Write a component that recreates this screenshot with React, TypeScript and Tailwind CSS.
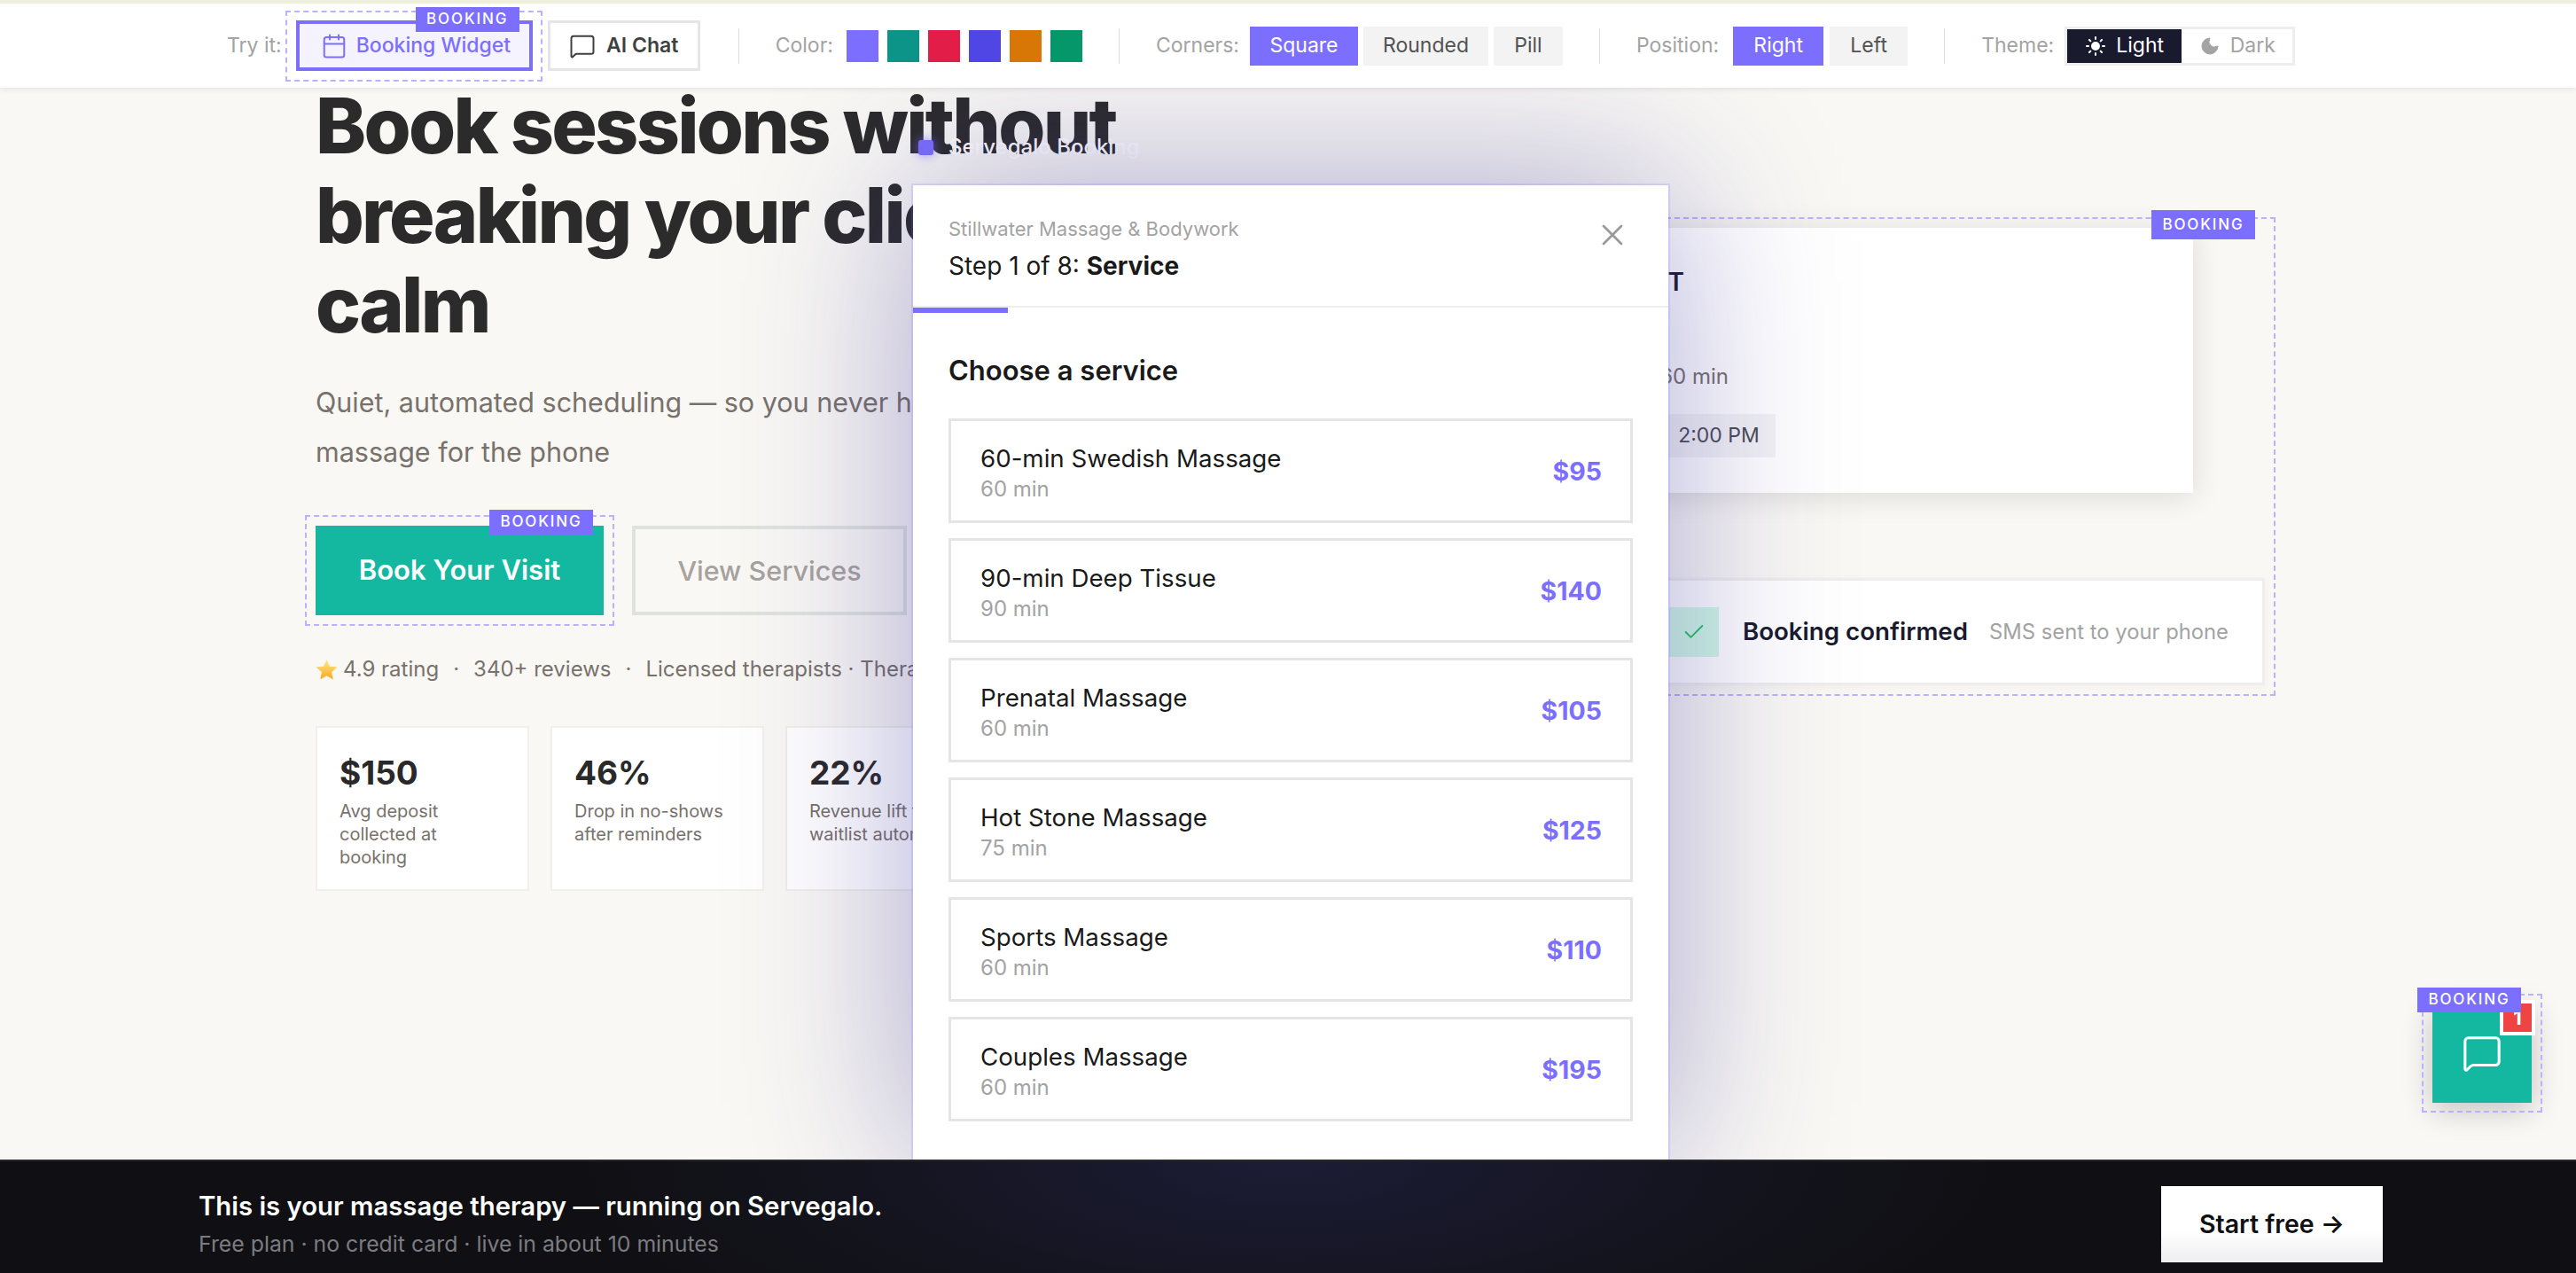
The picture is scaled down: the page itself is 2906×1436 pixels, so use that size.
import React from "react";
import { Calendar, MessageSquare, Sun, Moon, X, Check } from "lucide-react";

const FONT = "font-['Inter','Liberation_Sans',sans-serif]";

function Tag({ className = "", badge = "", inset = "-inset-[12px]" }: { className?: string; badge?: string; inset?: string }) {
  return (
    <>
      <div className={`absolute ${inset} border-2 border-dashed border-[#b9b2ff] pointer-events-none ${className}`} />
      <div className={`absolute flex items-center justify-center bg-[#7c6fff] text-white text-[17px] font-medium tracking-[0.11em] w-[117px] h-[28px] z-10 ${badge}`}>BOOKING</div>
    </>
  );
}

function Seg({ label, w, active = false }: { label: string; w: string; active?: boolean }) {
  return (
    <div className={`h-[44px] flex items-center justify-center text-[23px] ${w} ${active ? "bg-[#7c6fff] text-white" : "bg-[#f3f3f3] text-[#525252]"}`}>
      {label}
    </div>
  );
}

function Divider() {
  return <div className="w-[1px] h-[40px] bg-[#dedede]" />;
}

function Label({ children }: { children: React.ReactNode }) {
  return <span className="text-[23px] text-[#a3a3a3]">{children}</span>;
}

function Toolbar() {
  return (
    <div className="absolute left-0 right-0 top-0 z-30 h-[99px] bg-white border-t-[4px] border-[#eef0dc] shadow-[0_2px_6px_rgba(0,0,0,0.08)] pl-[256px] flex items-center gap-[41px]">
      <div className="flex items-center mr-[2px]">
        <Label>Try it:</Label>
        <div className="relative ml-[16px] h-[57px] w-[267px] border-[4px] border-[#7c6fff] bg-[#f5f3ff] text-[#7c6fff] flex items-center pl-[24px] gap-[10px] text-[23px] font-medium">
          <Calendar size={30} strokeWidth={1.6} />
          <span>Booking Widget</span>
          <Tag inset="-top-[15px] -left-[16px] -right-[15px] -bottom-[16px]" badge="-top-[19px] right-[11px]" />
        </div>
        <div className="ml-[17px] h-[57px] w-[172px] border-[3px] border-[#e5e5e5] bg-white text-[#404040] flex items-center justify-center gap-[12px] text-[23px] font-semibold">
          <MessageSquare size={30} strokeWidth={1.6} />
          <span>AI Chat</span>
        </div>
      </div>
      <Divider />
      <div className="flex items-center gap-[10px]">
        <span className="mr-[5px]"><Label>Color:</Label></span>
        <div className="w-[36px] h-[36px] bg-[#7c6fff]" />
        <div className="w-[36px] h-[36px] bg-[#0d9488]" />
        <div className="w-[36px] h-[36px] bg-[#e11d48]" />
        <div className="w-[36px] h-[36px] bg-[#4f46e5]" />
        <div className="w-[36px] h-[36px] bg-[#d97706]" />
        <div className="w-[36px] h-[36px] bg-[#059669]" />
      </div>
      <Divider />
      <div className="flex items-center gap-[6px]">
        <span className="mr-[6px]"><Label>Corners:</Label></span>
        <Seg label="Square" w="w-[122px]" active />
        <Seg label="Rounded" w="w-[141px]" />
        <Seg label="Pill" w="w-[78px]" />
      </div>
      <Divider />
      <div className="flex items-center gap-[7px]">
        <span className="mr-[9px]"><Label>Position:</Label></span>
        <Seg label="Right" w="w-[102px]" active />
        <Seg label="Left" w="w-[88px]" />
      </div>
      <Divider />
      <div className="flex items-center">
        <span className="mr-[12px]"><Label>Theme:</Label></span>
        <div className="flex h-[44px] w-[260px] border-[3px] border-[#eeeeee] bg-white text-[23px]">
          <div className="w-[129px] bg-[#1a1a2e] text-white flex items-center justify-center gap-[11px]">
            <Sun size={24} fill="white" strokeWidth={2} />
            <span>Light</span>
          </div>
          <div className="flex-1 text-[#a3a3a3] flex items-center justify-center gap-[11px]">
            <Moon size={24} fill="#a3a3a3" strokeWidth={1} />
            <span>Dark</span>
          </div>
        </div>
      </div>
    </div>
  );
}

function StarIcon() {
  return (
    <svg width="25" height="25" viewBox="0 0 24 24">
      <defs>
        <linearGradient id="st" x1="0" y1="0" x2="0" y2="1">
          <stop offset="0" stopColor="#ffe98a" />
          <stop offset="1" stopColor="#f9a81a" />
        </linearGradient>
      </defs>
      <path d="M12 1l3.3 7.4 8 .8-6 5.4 1.7 7.9-7-4.1-7 4.1 1.7-7.9-6-5.4 8-.8z" fill="url(#st)" />
    </svg>
  );
}

function Stat({ big, sub }: { big: string; sub: string }) {
  return (
    <div className="w-[241px] h-[186px] bg-white border-2 border-[#f0efeb] pl-[25px] pr-[26px] pt-[27px]">
      <div className="text-[37px] leading-[48px] font-bold text-[#292929]">{big}</div>
      <div className="mt-[6px] text-[20px] leading-[26px] text-[#78716c]">{sub}</div>
    </div>
  );
}

function Row({ name, time, price }: { name: string; time: string; price: string }) {
  return (
    <div className="h-[118px] border-[3px] border-[#e5e5e5] bg-white flex items-center justify-between pl-[33px] pr-[32px]">
      <div className="pt-[3px]">
        <div className="text-[27.7px] leading-[36px] text-[#1a1a1a]">{name}</div>
        <div className="mt-[2px] text-[24px] leading-[30px] text-[#a3a3a3]">{time}</div>
      </div>
      <div className="pt-[3px] text-[28.5px] font-bold text-[#7c6fff]">{price}</div>
    </div>
  );
}

function Modal() {
  return (
    <div className="absolute left-[1030px] top-[209px] w-[852px] h-[1099px] bg-white z-20 shadow-[0_0_0_2px_rgba(124,111,255,0.18),0_0_180px_rgba(60,50,150,0.42)]">
      <div className="relative h-[138px] border-b-2 border-[#eeeeee] pl-[40px] pt-[33px]">
        <div className="text-[22px] leading-[32px] text-[#a3a3a3]">Stillwater Massage &amp; Bodywork</div>
        <div className="mt-[8px] text-[28px] leading-[36px] text-[#1a1a1a]">
          Step 1 of 8: <span className="font-bold">Service</span>
        </div>
        <X className="absolute right-[43px] top-[36px] text-[#999999]" size={40} strokeWidth={1.6} />
      </div>
      <div className="w-[107px] h-[6px] bg-[#7c6fff]" />
      <div className="px-[40px] pt-[45px]">
        <div className="text-[31px] leading-[40px] font-semibold text-[#1a1a1a]">Choose a service</div>
        <div className="mt-[34px] flex flex-col gap-[17px]">
          <Row name="60-min Swedish Massage" time="60 min" price="$95" />
          <Row name="90-min Deep Tissue" time="90 min" price="$140" />
          <Row name="Prenatal Massage" time="60 min" price="$105" />
          <Row name="Hot Stone Massage" time="75 min" price="$125" />
          <Row name="Sports Massage" time="60 min" price="$110" />
          <Row name="Couples Massage" time="60 min" price="$195" />
        </div>
      </div>
    </div>
  );
}

export default function App() {
  return (
    <div className={`${FONT} relative w-[2906px] h-[1436px] overflow-hidden bg-[#f9f8f4] flex flex-col`}>
      <Toolbar />
      <main className="relative h-[1308px] overflow-hidden flex pl-[356px] pt-[92px]">
        <section className="w-[1184px] shrink-0">
          <h1 className="text-[86px] leading-[101px] font-extrabold tracking-[-0.032em] text-[#2b2b2b]">
            Book sessions without
            <br />
            breaking your client's
            <br />
            calm
          </h1>
          <p className="mt-[31px] text-[30.5px] leading-[56px] text-[#78716c]">
            Quiet, automated scheduling — so you never have to interrupt a
            <br />
            massage for the phone
          </p>
          <div className="mt-[55px] flex items-center gap-[32px]">
            <div className="relative w-[325px] h-[101px] bg-[#14b8a0] text-white text-[31px] font-semibold flex items-center justify-center">
              Book Your Visit
              <Tag badge="-top-[18px] right-[12px]" />
            </div>
            <div className="w-[310px] h-[101px] border-[4px] border-[#dfe3df] text-[#a8a29e] text-[30.5px] font-medium flex items-center justify-center">
              View Services
            </div>
          </div>
          <div className="mt-[41px] flex items-center text-[24px] leading-[40px] text-[#78716c] whitespace-nowrap">
            <StarIcon />
            <span className="ml-[6px]">4.9 rating</span>
            <span className="mx-[16px]">·</span>
            <span>340+ reviews</span>
            <span className="mx-[16px]">·</span>
            <span>Licensed therapists · Therapist-owned</span>
          </div>
          <div className="mt-[44px] flex gap-[24px]">
            <Stat big="$150" sub="Avg deposit collected at booking" />
            <Stat big="46%" sub="Drop in no-shows after reminders" />
            <Stat big="22%" sub="Revenue lift from waitlist automation" />
          </div>
        </section>
        <section className="relative w-[1015px] shrink-0 mt-[165px] h-[516px]">
          <Tag badge="-top-[20px] right-[11px] !h-[33px]" />
          <div className="h-[299px] w-[934px] bg-white shadow-[0_4px_32px_rgba(0,0,0,0.12)] pt-[43px]">
            <div className="w-[360px] text-right text-[28px] leading-[36px] font-semibold text-[#1a1a2e] whitespace-nowrap">Next opening PT</div>
            <div className="w-[410px] mt-[71px] text-right text-[24px] leading-[36px] text-[#78716c] whitespace-nowrap">Swedish · 60 min</div>
            <div className="w-[463px] mt-[24px] flex justify-end gap-[10px]">
              <div className="h-[49px] px-[20px] flex items-center bg-[#f3f3f5] text-[23px] text-[#4b4b55]">1:00 PM</div>
              <div className="h-[49px] w-[128px] flex items-center justify-center bg-[#f3f3f5] text-[23px] text-[#4b4b55]">2:00 PM</div>
            </div>
          </div>
          <div className="mt-[96px] h-[121px] border-[3px] border-[#eeeeee] bg-white flex items-center justify-end pr-[38px] shadow-[0_2px_10px_rgba(0,0,0,0.04)]">
            <div className="w-[56px] h-[56px] bg-[#d1fae5] flex items-center justify-center text-[#22c55e]">
              <Check size={28} strokeWidth={1.6} />
            </div>
            <span className="ml-[27px] text-[27.7px] font-semibold text-[#1a1a2e]">Booking confirmed</span>
            <span className="ml-[24px] text-[23.8px] text-[#a3a3a3]">SMS sent to your phone</span>
          </div>
        </section>

        <div className="absolute left-[1036px] top-[148px] h-[36px] z-10 flex items-center gap-[17px]">
          <div className="w-[17px] h-[17px] rounded-[3px] bg-[#7c6fff] shadow-[0_0_12px_rgba(124,111,255,0.7)]" />
          <span className="text-[24px] font-medium text-white">Servegalo Booking</span>
        </div>
        <Modal />

        <div className="absolute right-[50px] bottom-[64px] w-[112px] h-[112px] bg-[#14b8a0] z-10 flex items-center justify-center text-white shadow-[0_8px_32px_rgba(0,0,0,0.22)]">
          <MessageSquare size={46} strokeWidth={1.6} />
          <div className="absolute -top-[4px] -right-[4px] w-[40px] h-[40px] bg-[#ef4444] border-[4px] border-white flex items-center justify-center text-[22px] font-bold leading-none">1</div>
          <Tag inset="-top-[11px] -left-[12px] -right-[12px] -bottom-[11px]" badge="-top-[18px] -left-[17px]" />
        </div>
      </main>
      <footer className="h-[128px] border-t-2 border-[#27272a] bg-[radial-gradient(ellipse_800px_260px_at_50%_0%,#1c1c36_0%,#13131c_70%,#101014_100%)] pl-[224px] pr-[218px] pt-[28px] flex items-start justify-between">
        <div className="pt-[3px]">
          <div className="text-[29.3px] leading-[40px] font-semibold text-white">This is your massage therapy — running on Servegalo.</div>
          <div className="mt-[4px] text-[24.8px] leading-[36px] text-[#7c7c80]">Free plan · no credit card · live in about 10 minutes</div>
        </div>
        <div className="w-[250px] h-[86px] bg-[linear-gradient(#ffffff_60%,#eeeef0)] flex items-center justify-center text-[28.5px] font-semibold text-[#111114]">Start free →</div>
      </footer>
    </div>
  );
}
